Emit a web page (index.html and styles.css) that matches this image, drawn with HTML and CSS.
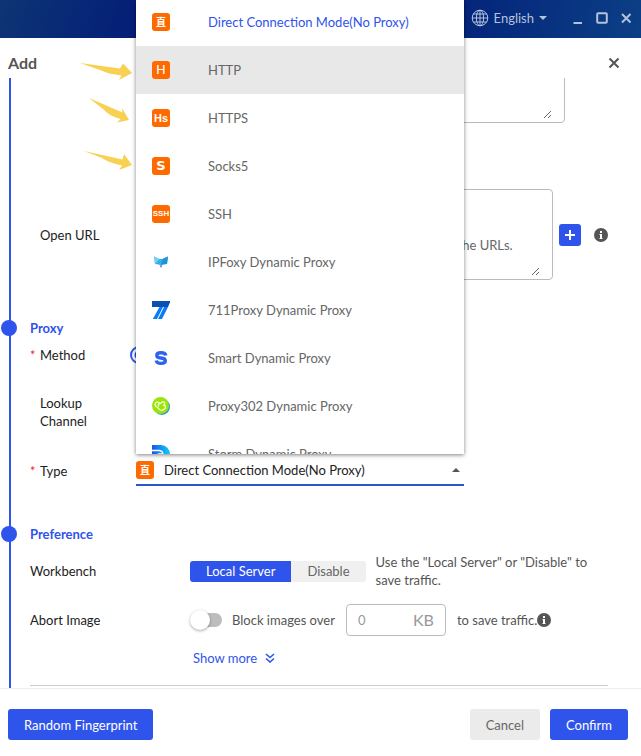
FILE: index.html
```html
<!DOCTYPE html>
<html lang="en">
<head>
<meta charset="utf-8">
<meta name="viewport" content="width=device-width, initial-scale=1">
<title>Add</title>
<link rel="stylesheet" href="styles.css">
</head>
<body>
<div class="app">
  <header class="titlebar">
    <button class="lang" type="button">
      <svg width="18" height="18" viewBox="0 0 18 18" fill="none" stroke="currentColor" aria-hidden="true"><circle cx="9" cy="9" r="7.8"/><ellipse cx="9" cy="9" rx="3.6" ry="7.8"/><path d="M9 1v16M1 9h16M2.4 5h13.2M2.4 13h13.2"/></svg>
      <span>English</span>
      <svg width="8" height="4" viewBox="0 0 8 4" aria-hidden="true"><path d="M0 0h8L4 4z" fill="currentColor"/></svg>
    </button>
    <div class="window-controls">
      <button type="button" aria-label="Minimize"><svg width="12" height="12" viewBox="0 0 12 12"><path d="M1.500 11h8.500" stroke="currentColor" stroke-width="2"/></svg></button>
      <button type="button" aria-label="Maximize"><svg width="12" height="12" viewBox="0 0 12 12"><rect x="1.200" y="1.200" width="9.600" height="9.600" rx="1" fill="none" stroke="currentColor" stroke-width="2"/></svg></button>
      <button type="button" aria-label="Close window"><svg width="12" height="12" viewBox="0 0 12 12"><path d="M2 2l8.500 8.500M10.500 2L2 10.500" stroke="currentColor" stroke-width="2"/></svg></button>
    </div>
  </header>

  <div class="dialog-head">
    <h1>Add</h1>
    <button type="button" class="close" aria-label="Close"><svg width="12" height="12" viewBox="0 0 12 12"><path d="M1.500 1.500l9 9M10.500 1.500l-9 9" stroke="currentColor" stroke-width="2"/></svg></button>
  </div>

  <main class="form">
    <div class="row notes">
      <div class="textbox"><textarea aria-label="Notes"></textarea></div>
    </div>
    <div class="row url">
      <label class="label" for="url">Open URL</label>
      <div class="textbox"><textarea id="url" placeholder="&#10;&#10;Open pages at start-up. Use one line each to separate the URLs."></textarea></div>
      <button type="button" class="plus" aria-label="Add URL"><svg width="12" height="12" viewBox="0 0 12 12"><path d="M6 1v10M1 6h10" stroke="currentColor" stroke-width="2"/></svg></button>
      <svg class="info" width="14" height="14" viewBox="0 0 14 14" role="img" aria-label="Info"><circle cx="7" cy="7" r="7" fill="#555"/><path d="M6 3h2v2H6zM5.500 6H8v4h.5v1h-3v-1H6V7h-.5z" fill="#fff"/></svg>
    </div>

    <h2>Proxy</h2>
    <div class="row method">
      <label class="label required" for="method">Method</label>
      <input class="radio" id="method" type="radio" name="method" checked>
    </div>
    <div class="row lookup"><span class="label">Lookup Channel</span></div>
    <div class="row type">
      <label class="label required" for="type">Type</label>
      <div class="select">
        <span class="badge" lang="zh">直</span>
        <select id="type"><option>Direct Connection Mode(No Proxy)</option></select>
        <svg width="8" height="4" viewBox="0 0 8 4" aria-hidden="true"><path d="M0 4h8L4 0z" fill="#555"/></svg>
      </div>
    </div>

    <h2 class="pref">Preference</h2>
    <div class="row workbench">
      <span class="label">Workbench</span>
      <div class="segment"><button type="button" class="on">Local Server</button><button type="button">Disable</button></div>
      <p class="hint">Use the "Local Server" or "Disable" to save traffic.</p>
    </div>
    <div class="row abort">
      <label class="label" for="abort">Abort Image</label>
      <input class="switch" id="abort" type="checkbox">
      <label class="grey" for="size">Block images over</label>
      <div class="size"><input id="size" type="text" value="0"><span>KB</span></div>
      <span class="grey">to save traffic.</span>
      <svg class="info" width="14" height="14" viewBox="0 0 14 14" role="img" aria-label="Info"><circle cx="7" cy="7" r="7" fill="#555"/><path d="M6 3h2v2H6zM5.500 6H8v4h.5v1h-3v-1H6V7h-.5z" fill="#fff"/></svg>
    </div>
    <button type="button" class="more">Show more <svg width="10" height="10" viewBox="0 0 10 10" fill="none" stroke="currentColor" stroke-width="1.600" aria-hidden="true"><path d="M1 1l4 3.500L9 1M1 5.500L5 9l4-3.500"/></svg></button>
    <hr>
  </main>

  <footer class="footer">
    <button type="button" class="btn primary">Random Fingerprint</button>
    <button type="button" class="btn cancel">Cancel</button>
    <button type="button" class="btn primary">Confirm</button>
  </footer>

  <div class="menu">
    <ul role="listbox" aria-label="Type">
      <li role="option" aria-selected="true" class="chosen"><span class="badge" lang="zh">直</span>Direct Connection Mode(No Proxy)</li>
      <li role="option" class="hover"><span class="badge b-h">H</span>HTTP</li>
      <li role="option"><span class="badge b-hs">Hs</span>HTTPS</li>
      <li role="option"><span class="badge b-s">S</span>Socks5</li>
      <li role="option"><span class="badge b-ssh">SSH</span>SSH</li>
      <li role="option"><svg width="18" height="18" viewBox="0 0 18 18" aria-hidden="true"><path d="M2 3.500l5.500 2.500h3L16 3.500l-1 7.500-4 .5-2 2-2-2-4-.5z" fill="#36aee8"/><path d="M2 3.500l5.500 2.500L3 11z" fill="#79d0f3"/><path d="M16 3.500L10.500 6l-1.500 5.500 6-.5z" fill="#1e93dc"/><path d="M8.200 13h1.600L9 15z" fill="#456"/></svg>IPFoxy Dynamic Proxy</li>
      <li role="option"><svg width="18" height="18" viewBox="0 0 18 18" aria-hidden="true"><path d="M0 0h18.500l-2.500 6H0z" fill="#0b4fb3"/><path d="M7.500 6H11L5 18H.800zM12 6h4L10 18H6z" fill="#0a7cf8"/></svg>711Proxy Dynamic Proxy</li>
      <li role="option"><svg width="18" height="18" viewBox="0 0 18 18" fill="none" stroke="#2f63ee" stroke-width="3.400" aria-hidden="true"><path d="M13.800 6.500C13.300 4 11.500 3.800 9 3.800 6.200 3.800 4.800 4.800 4.800 6.400 4.800 8.600 7 8.800 9 9c2.500.2 4.300.8 4.300 2.800 0 1.800-1.600 2.600-4.300 2.600-2.500 0-4.300-.6-4.800-2.900"/></svg>Smart Dynamic Proxy</li>
      <li role="option"><svg width="18" height="18" viewBox="0 0 18 18" aria-hidden="true"><circle cx="9.800" cy="9.800" r="8.200" fill="#2b9ccb"/><circle cx="8.500" cy="8.500" r="8.500" fill="#9be40b"/><path d="M8 6.500C6.500 4 3 5 3 7.500S6 10 8 13c1.500 1 5-.5 5.500-2.500C14 8.500 12 8 11 8.500 14 7 13 4.500 10.500 5 9 5.300 9.500 6.500 8 6.500c-1.500 0-2.500 1.500-1 3" fill="none" stroke="#f2ffd0" stroke-width="1.300"/></svg>Proxy302 Dynamic Proxy</li>
      <li role="option"><svg width="18" height="18" viewBox="0 0 18 18" aria-hidden="true"><defs><linearGradient id="storm"><stop stop-color="#1457ef"/><stop offset="1" stop-color="#14cdf5"/></linearGradient></defs><path d="M0 0h9a9 9 0 0 1 0 18H0z" fill="url(#storm)"/><path d="M0 5.500h7.500A4 4 0 0 1 11 9H6" fill="none" stroke="#fff" stroke-width="1.300"/></svg>Storm Dynamic Proxy</li>
    </ul>
  </div>

  <svg class="arrows" width="56" height="112" viewBox="0 0 56 112" fill="#f8d052" aria-hidden="true">
    <path d="M2 3l40 5.500L45 3.500l9 9.500-13 7 2.500-4.500Q30 14 22 10z"/>
    <path d="M11 38l33.500 14.500-.5-4.500 7 12-12 2.500 3.500-3.500Q31 56 25 49z"/>
    <path d="M6 91l38.500 8.500L46 94l8 11-13 5 3-4.500Q31 103 24 98z"/>
  </svg>
</div>
</body>
</html>
```
FILE: styles.css
```css
* { box-sizing: border-box; }
body {
  margin: 0;
  font: 13px/18px Lato, "Noto Sans CJK SC", sans-serif;
  color: #222;
  background: #fff;
}
button, input, select, textarea { font: inherit; color: inherit; }
button { border: 0; padding: 0; background: none; cursor: pointer; }
svg { flex: none; display: block; }
h1, h2, p, ul { margin: 0; padding: 0; }

.app {
  position: relative;
  display: flex;
  flex-direction: column;
  height: 100vh;
  overflow: hidden;
}

.titlebar {
  flex: none;
  height: 38px;
  display: flex;
  align-items: center;
  justify-content: flex-end;
  gap: 25px;
  padding: 0 9px 2px;
  color: #b4c2dc;
  background: linear-gradient(100deg, #0d3474 0%, #031c78 24%, #04257b 72%, #0c3f85 100%);
}
.lang { display: flex; align-items: center; gap: 5px; }
.window-controls { display: flex; gap: 12px; }

.dialog-head {
  flex: none;
  height: 40px;
  display: flex;
  align-items: center;
  justify-content: space-between;
  padding: 10px 21px 0 8px;
}
h1 { font-size: 16px; color: #555; }
.close { color: #555; }

.form {
  position: relative;
  flex: 1;
  min-height: 0;
  overflow: hidden;
  padding: 0 33px 0 30px;
}
.form::before {
  content: "";
  position: absolute;
  left: 9px;
  top: 0;
  bottom: 0;
  width: 2px;
  background: #2f54eb;
}
.row { display: flex; align-items: center; }
.label { flex: none; width: 106px; padding: 0 16px 0 10px; }
.required { position: relative; }
.required::before { content: "*"; position: absolute; left: 0; color: #f5222d; }

.textbox {
  flex: 1;
  border: 1px solid #bbb;
  border-radius: 4px;
  padding: 0 12px 3px;
}
.textbox textarea {
  display: block;
  width: 100%;
  height: 86px;
  padding: 10px 0 0;
  border: 0;
  outline: 0;
  resize: vertical;
  overflow: hidden;
  background: none;
}
.textbox textarea::placeholder { color: #666; }

.notes { margin: -46px 43px 0 106px; }
.url { margin-top: 66px; }
.plus {
  flex: none;
  display: grid;
  place-items: center;
  width: 22px;
  height: 22px;
  margin: 0 13px 0 6px;
  border-radius: 3px;
  color: #fff;
  background: #2f54eb;
}

h2 { position: relative; font-size: 13px; line-height: 18px; color: #2f54eb; }
h2::before {
  content: "";
  position: absolute;
  left: -29px;
  top: 1px;
  width: 16px;
  height: 16px;
  border-radius: 50%;
  background: #2f54eb;
}
.url + h2 { margin-top: 39px; }
.method { margin-top: 9px; }
.radio {
  appearance: none;
  width: 18px;
  height: 18px;
  margin: 0 0 0 -6px;
  border: 2px solid #2f54eb;
  border-radius: 50%;
  background: radial-gradient(#2f54eb 4px, transparent 5px);
}
.lookup { margin-top: 30px; }
.type { margin-top: 26px; }
.select {
  flex: 0 1 328px;
  display: flex;
  align-items: center;
  height: 30px;
  padding-right: 4px;
  border-bottom: 2px solid #2f54c8;
}
.select select {
  flex: 1;
  appearance: none;
  padding: 0 0 0 10px;
  border: 0;
  outline: 0;
  background: none;
}

.pref { margin-top: 39px; }
.workbench { margin-top: 10px; }
.workbench .label, .abort .label { width: 160px; padding-left: 0; }
.segment { flex: none; display: flex; border-radius: 3px; overflow: hidden; }
.segment button { height: 21px; padding: 0 16px; color: #666; background: #f0f0f0; }
.segment .on { color: #fff; background: #2f54eb; }
.hint { margin-left: 10px; color: #555; }
.abort { margin-top: 15px; }
.switch {
  appearance: none;
  flex: none;
  position: relative;
  width: 28px;
  height: 14px;
  margin: 0 10px 0 4px;
  border-radius: 8px;
  background: #bdbdbd;
}
.switch::before {
  content: "";
  position: absolute;
  left: -4px;
  top: -3px;
  width: 20px;
  height: 20px;
  border-radius: 50%;
  background: #fff;
  box-shadow: 0 1px 3px rgba(0, 0, 0, .35);
}
.grey { color: #555; white-space: nowrap; }
.size {
  display: flex;
  align-items: center;
  width: 100px;
  height: 32px;
  margin: 0 11px;
  padding: 0 11px;
  border: 1px solid #bbb;
  border-radius: 4px;
  color: #999;
}
.size input { flex: 1; min-width: 0; padding: 0; border: 0; outline: 0; background: none; }
.size span { font-size: 16px; }
.more {
  display: flex;
  align-items: center;
  gap: 8px;
  margin: 13px 0 0 163px;
  color: #2f54eb;
}
hr { margin: 18px 0 0; border: 0; border-top: 1px solid #ccc; }

.footer {
  flex: none;
  display: flex;
  align-items: center;
  gap: 10px;
  height: 68px;
  padding: 4px 13px 0 8px;
  border-top: 1px solid #eee;
}
.btn {
  height: 31px;
  padding: 0 16px;
  border-radius: 3px;
}
.primary { color: #fff; background: #2f54eb; }
.cancel { margin-left: auto; color: #666; background: #ebebeb; }

.menu {
  position: absolute;
  left: 136px;
  top: 0;
  width: 328px;
  height: 454px;
  overflow: hidden;
  background: #fff;
  box-shadow: 0 1px 4px rgba(0, 0, 0, .5);
}
.menu ul { margin-top: -2px; list-style: none; }
.menu li {
  display: flex;
  align-items: center;
  gap: 38px;
  height: 48px;
  padding-left: 16px;
  color: #666;
}
.menu .chosen { color: #2f54eb; }
.menu .hover { background: #e8e8e8; }
.badge {
  flex: none;
  display: grid;
  place-items: center;
  width: 18px;
  height: 18px;
  border-radius: 3px;
  font: bold 10px/18px "Noto Sans CJK SC", sans-serif;
  color: #fff;
  background: #ff6a00;
}
.b-h, .b-s { font: 13px/18px "DejaVu Sans", sans-serif; }
.b-s { font-weight: bold; }
.b-hs { font: bold 11px/18px "Liberation Sans", sans-serif; }
.b-ssh { font: bold 8px/18px "Liberation Sans", sans-serif; }
.arrows { position: absolute; left: 78px; top: 60px; }
```
